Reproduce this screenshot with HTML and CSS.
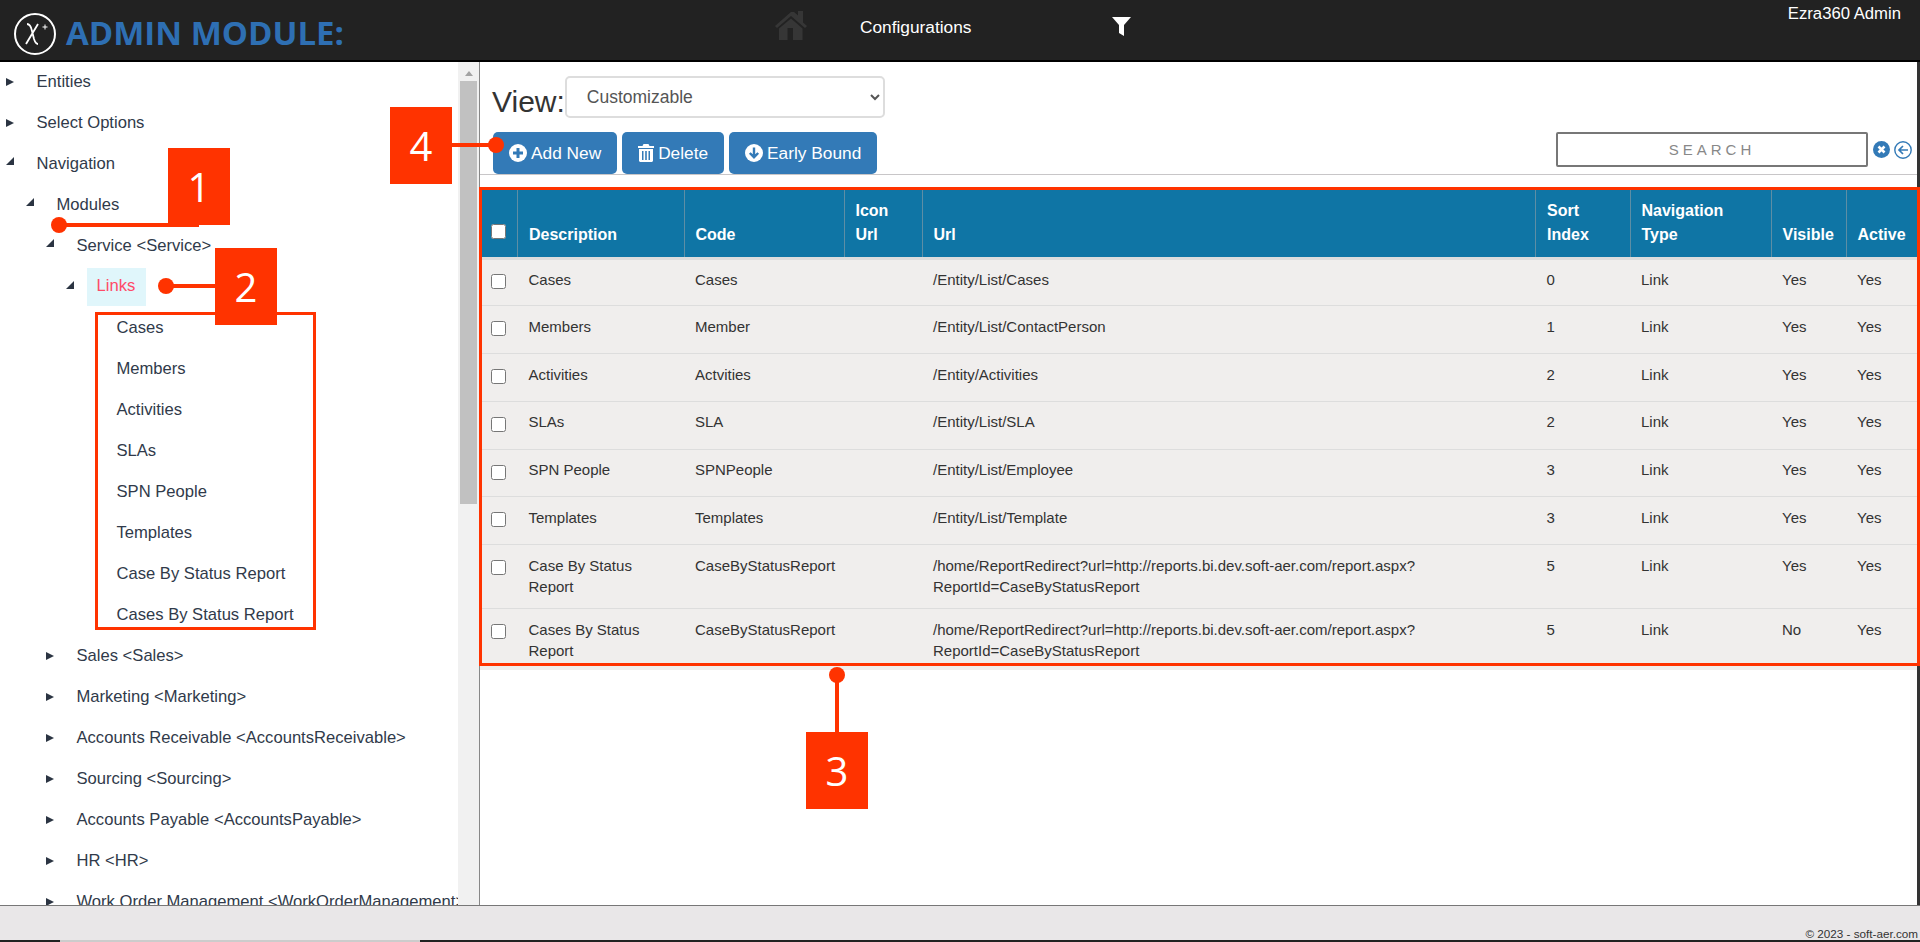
FILE: index.html
```html
<!DOCTYPE html>
<html lang="en">
<head>
  <meta charset="UTF-8">
  <title>Admin Module</title>
  <link rel="stylesheet" href="styles.css">
</head>
<body>

<header class="topbar">
  <div class="brand">
    <svg class="logo" viewBox="0 0 44 44" width="44" height="44">
      <circle cx="22" cy="22" r="20" fill="none" stroke="#fff" stroke-width="2"/>
      <path d="M14 12c3 0 4 2 5 7l2 8c1 3 2 5 4 5M25 12 13 32" fill="none" stroke="#fff" stroke-width="1.800"/>
      <path d="M29.500 15h5M32 12.500v5" stroke="#fff" stroke-width="1"/>
    </svg>
    <span class="brand-title">ADMIN MODULE:</span>
  </div>
  <svg class="home-icon" viewBox="0 0 32 30" width="32" height="30">
    <path d="M16 1 0 15l2 2 14-12 14 12 2-2-4-3.500V0h-5v4.500l-4-3.500z" fill="#363636"/>
    <path d="M4 17.500 16 7.500l11.500 10V29H18V17h-5.500v12H4z" fill="#363636"/>
  </svg>
  <span class="nav-title">Configurations</span>
  <svg class="filter-icon" viewBox="0 0 19 19" width="19" height="19">
    <path d="M0 0h19l-7 8v11l-5-3V8z" fill="#fff"/>
  </svg>
  <span class="user-name">Ezra360 Admin</span>
</header>

<main class="workspace">
  <aside class="sidebar">
    <ul class="tree">
      <li class="closed"><span>Entities</span></li>
      <li class="closed"><span>Select Options</span></li>
      <li class="open"><span>Navigation</span>
        <ul>
          <li class="open"><span>Modules</span>
            <ul>
              <li class="open"><span>Service &lt;Service&gt;</span>
                <ul>
                  <li class="open"><span class="selected">Links</span>
                    <ul>
                      <li><span>Cases</span></li>
                      <li><span>Members</span></li>
                      <li><span>Activities</span></li>
                      <li><span>SLAs</span></li>
                      <li><span>SPN People</span></li>
                      <li><span>Templates</span></li>
                      <li><span>Case By Status Report</span></li>
                      <li><span>Cases By Status Report</span></li>
                    </ul>
                  </li>
                </ul>
              </li>
              <li class="closed"><span>Sales &lt;Sales&gt;</span></li>
              <li class="closed"><span>Marketing &lt;Marketing&gt;</span></li>
              <li class="closed"><span>Accounts Receivable &lt;AccountsReceivable&gt;</span></li>
              <li class="closed"><span>Sourcing &lt;Sourcing&gt;</span></li>
              <li class="closed"><span>Accounts Payable &lt;AccountsPayable&gt;</span></li>
              <li class="closed"><span>HR &lt;HR&gt;</span></li>
              <li class="closed"><span>Work Order Management &lt;WorkOrderManagement&gt;</span></li>
            </ul>
          </li>
        </ul>
      </li>
    </ul>
    <div class="scrollbar">
      <i class="scroll-up"></i>
      <div class="scroll-thumb"></div>
    </div>
  </aside>

  <section class="content">
    <div class="view-row">
      <label class="view-label" for="view">View:</label>
      <select class="view-select" id="view">
        <option>Customizable</option>
      </select>
    </div>

    <div class="toolbar">
      <button class="btn" type="button">
        <svg viewBox="0 0 18 18" width="18" height="18"><circle cx="9" cy="9" r="9" fill="#fff"/><path d="M4 9h10M9 4v10" stroke="#337ab7" stroke-width="3"/></svg>
        Add New
      </button>
      <button class="btn" type="button">
        <svg viewBox="0 0 16 18" width="16" height="18"><path d="M5.500 0h5l1 2H16v2H0V2h4.500zM1 5h14v12l-1 1H2l-1-1zM4 7v9h1.500V7zM7.200 7v9h1.600V7zM10.500 7v9H12V7z" fill="#fff" fill-rule="evenodd"/></svg>
        Delete
      </button>
      <button class="btn" type="button">
        <svg viewBox="0 0 18 18" width="18" height="18"><circle cx="9" cy="9" r="9" fill="#fff"/><path d="M9 3.500V13M4.800 9 9 13.200 13.200 9" fill="none" stroke="#337ab7" stroke-width="2.400"/></svg>
        Early Bound
      </button>
      <div class="search-box">
        <input class="search-input" type="text" placeholder="SEARCH">
        <svg viewBox="0 0 17 17" width="17" height="17"><circle cx="8.500" cy="8.500" r="8.500" fill="#337ab7"/><path d="m5.500 5.500 6 6M11.500 5.500l-6 6" stroke="#fff" stroke-width="2.600"/></svg>
        <svg viewBox="0 0 18 18" width="18" height="18"><circle cx="9" cy="9" r="8.200" fill="none" stroke="#337ab7" stroke-width="1.400"/><path d="M14 9H5M9 5 5 9l4 4" fill="none" stroke="#337ab7" stroke-width="1.700"/></svg>
      </div>
    </div>

    <table class="grid">
      <colgroup>
        <col class="col-check"><col class="col-desc"><col class="col-code"><col class="col-icon"><col class="col-url">
        <col class="col-sort"><col class="col-type"><col class="col-visible"><col class="col-active">
      </colgroup>
      <thead>
        <tr>
          <th><input type="checkbox"></th>
          <th>Description</th>
          <th>Code</th>
          <th>Icon Url</th>
          <th>Url</th>
          <th>Sort Index</th>
          <th>Navigation Type</th>
          <th>Visible</th>
          <th>Active</th>
        </tr>
      </thead>
      <tbody>
        <tr><td><input type="checkbox"></td><td>Cases</td><td>Cases</td><td></td><td>/Entity/List/Cases</td><td>0</td><td>Link</td><td>Yes</td><td>Yes</td></tr>
        <tr><td><input type="checkbox"></td><td>Members</td><td>Member</td><td></td><td>/Entity/List/ContactPerson</td><td>1</td><td>Link</td><td>Yes</td><td>Yes</td></tr>
        <tr><td><input type="checkbox"></td><td>Activities</td><td>Actvities</td><td></td><td>/Entity/Activities</td><td>2</td><td>Link</td><td>Yes</td><td>Yes</td></tr>
        <tr><td><input type="checkbox"></td><td>SLAs</td><td>SLA</td><td></td><td>/Entity/List/SLA</td><td>2</td><td>Link</td><td>Yes</td><td>Yes</td></tr>
        <tr><td><input type="checkbox"></td><td>SPN People</td><td>SPNPeople</td><td></td><td>/Entity/List/Employee</td><td>3</td><td>Link</td><td>Yes</td><td>Yes</td></tr>
        <tr><td><input type="checkbox"></td><td>Templates</td><td>Templates</td><td></td><td>/Entity/List/Template</td><td>3</td><td>Link</td><td>Yes</td><td>Yes</td></tr>
        <tr><td><input type="checkbox"></td><td>Case By Status Report</td><td>CaseByStatusReport</td><td></td><td>/home/ReportRedirect?url=http://reports.bi.dev.soft-aer.com/report.aspx?ReportId=CaseByStatusReport</td><td>5</td><td>Link</td><td>Yes</td><td>Yes</td></tr>
        <tr><td><input type="checkbox"></td><td>Cases By Status Report</td><td>CaseByStatusReport</td><td></td><td>/home/ReportRedirect?url=http://reports.bi.dev.soft-aer.com/report.aspx?ReportId=CaseByStatusReport</td><td>5</td><td>Link</td><td>No</td><td>Yes</td></tr>
      </tbody>
    </table>
  </section>
</main>

<footer class="footer">© 2023 - soft-aer.com</footer>
<div class="taskstrip"><div class="taskstrip-item"></div></div>

<!-- callouts drawn over the screenshot -->
<div class="callout-box box-1">1</div>
<div class="callout-line line-1"></div>
<div class="callout-dot dot-1"></div>

<div class="callout-box box-2">2</div>
<div class="callout-line line-2"></div>
<div class="callout-dot dot-2"></div>
<div class="callout-frame frame-links"></div>

<div class="callout-box box-3">3</div>
<div class="callout-line line-3"></div>
<div class="callout-dot dot-3"></div>
<div class="callout-frame frame-table"></div>

<div class="callout-box box-4">4</div>
<div class="callout-line line-4"></div>
<div class="callout-dot dot-4"></div>

</body>
</html>
```

FILE: styles.css
```css
* {
  box-sizing: border-box;
}

html, body {
  height: 100%;
}

body {
  margin: 0;
  height: 942px;
  overflow: hidden;
  display: flex;
  flex-direction: column;
  position: relative;
  font-family: "Liberation Sans", Arial, sans-serif;
  font-size: 15px;
  color: #333;
  background: #333;
}

/* top bar */
.topbar {
  height: 62px;
  flex: none;
  display: flex;
  background: #222;
  border-bottom: 2px solid #000;
  color: #fff;
}

.brand {
  width: 775px;
  padding: 12px 0 0 13px;
  display: flex;
  align-items: flex-start;
  gap: 9px;
}

.brand-title {
  font-family: "Open Sans", sans-serif;
  font-size: 33px;
  font-weight: 700;
  line-height: 42px;
  color: #2e6fb3;
}

.home-icon {
  margin-top: 11px;
  flex: none;
}

.nav-title {
  margin: 15px 0 0 53px;
  width: 252px;
  font-size: 17.300px;
  line-height: 24px;
}

.filter-icon {
  margin-top: 17px;
  flex: none;
}

.user-name {
  margin-left: auto;
  margin-right: 19px;
  margin-top: 3px;
  font-size: 16.700px;
  line-height: 22px;
}

/* main */
.workspace {
  flex: 1;
  min-height: 0;
  display: flex;
  background: #fff;
  margin-right: 3px;
}

.sidebar {
  width: 480px;
  flex: none;
  display: flex;
  border-right: 1px solid #888;
  overflow: hidden;
}

.tree {
  width: 458px;
  flex: none;
  overflow: hidden;
  font-size: 16.600px;
  color: #303a4a;
}

.tree, .tree ul {
  list-style: none;
  margin: 0;
  padding: 0;
}

.tree {
  padding-left: 36.500px;
}

.tree ul {
  padding-left: 20px;
}

.tree li {
  position: relative;
}

.tree span {
  display: inline-block;
  height: 41px;
  line-height: 39px;
  white-space: nowrap;
}

.tree li.closed::before,
.tree li.open::before {
  content: "";
  position: absolute;
  width: 0;
  height: 0;
  border-style: solid;
}

.tree li.closed::before {
  left: -30.500px;
  top: 16px;
  border-width: 4.500px 0 4.500px 8px;
  border-color: transparent transparent transparent #2b3442;
}

.tree li.open::before {
  left: -30.500px;
  top: 13px;
  border-width: 0 0 8px 8px;
  border-color: transparent transparent #2b3442 transparent;
}

.tree .selected {
  margin: 1px 0 0 -10px;
  height: 38px;
  line-height: 36px;
  padding: 0 11px 0 10px;
  background: #e0f6fb;
  color: #ff4a68;
  display: block;
  width: max-content;
}

.tree .open > .selected {
  margin-bottom: 2px;
}

.scrollbar {
  width: 21px;
  flex: none;
  padding: 0 2px 0 2px;
  background: #f1f1f1;
}

.scroll-up {
  display: block;
  width: 0;
  height: 0;
  margin: 9px auto 5px;
  border-style: solid;
  border-width: 0 4.500px 5px 4.500px;
  border-color: transparent transparent #a3a3a3 transparent;
}

.scroll-thumb {
  height: 423px;
  background: #c1c1c1;
}

.content {
  flex: 1;
  min-width: 0;
}

.view-row {
  height: 70px;
  padding: 14px 0 0 12px;
  display: flex;
  align-items: flex-start;
}

.view-label {
  font-size: 30px;
  line-height: 50px;
  margin-top: 1px;
}

.view-select {
  width: 320px;
  height: 42px;
  padding: 0 16px;
  font-family: inherit;
  font-size: 17.500px;
  color: #555;
  background: #fff;
  border: 2px solid #ddd;
  border-radius: 5px;
}

.toolbar {
  height: 43px;
  display: flex;
  gap: 5px;
  padding-left: 13px;
  border-bottom: 1px solid #c8c6c8;
}

.btn {
  height: 42px;
  padding: 0 16px;
  display: flex;
  align-items: center;
  gap: 4px;
  font-family: inherit;
  font-size: 17.300px;
  color: #fff;
  background: #337ab7;
  border: 0;
  border-radius: 5px;
}

.search-box {
  margin-left: auto;
  height: 35px;
  display: flex;
  align-items: center;
  gap: 4px;
  padding-right: 5px;
}

.search-input {
  width: 312px;
  height: 35px;
  margin-right: 1px;
  font-family: inherit;
  font-size: 15px;
  letter-spacing: 4px;
  text-align: center;
  border: 2px solid #777;
  border-radius: 2px;
}

.search-input::placeholder {
  color: #888;
  opacity: 1;
}

.grid {
  width: 1437px;
  margin: 14px 0 0 0;
  table-layout: fixed;
  border-collapse: collapse;
}

.col-check { width: 37.5px; }
.col-desc { width: 166.5px; }
.col-code { width: 160px; }
.col-icon { width: 78px; }
.col-url { width: 613.5px; }
.col-sort { width: 94.5px; }
.col-type { width: 141px; }
.col-visible { width: 75px; }
.col-active { width: 71px; }

.grid th {
  height: 69px;
  padding: 0 10px 10px 11px;
  text-align: left;
  vertical-align: bottom;
  font-size: 16px;
  line-height: 24px;
  color: #fff;
  background: #0f75a5;
  border-left: 1px solid #5d8ea5;
  border-bottom: 3px solid #ddd;
}

.grid th:first-child {
  border-left: 0;
}

.grid td {
  padding: 9.600px 10px 11.400px 11px;
  vertical-align: top;
  font-size: 15px;
  line-height: 21px;
  background: #f0eeed;
  border-bottom: 1px solid #ddd;
}

.grid tbody tr {
  height: 47.800px;
}

.grid tbody tr:last-child td {
  padding-bottom: 9px;
  border-bottom: 0;
}

.grid input[type="checkbox"] {
  width: 15px;
  height: 15px;
  margin: 5.400px 0 0 0;
  display: block;
}

.grid th input[type="checkbox"] {
  margin: 0 0 8px 0;
}

/* footer */
.footer {
  height: 35px;
  flex: none;
  padding: 21px 2px 0 0;
  text-align: right;
  font-size: 11.700px;
  line-height: 13px;
  background: #e9e7e8;
  border-top: 1px solid #777;
}

.taskstrip {
  height: 2px;
  flex: none;
  padding-left: 60px;
  background: #222;
}

.taskstrip-item {
  width: 360px;
  height: 2px;
  background: #ccc;
}

/* callouts */
.callout-box {
  position: absolute;
  width: 62px;
  height: 77px;
  font-family: "Open Sans", sans-serif;
  font-size: 40px;
  line-height: 77px;
  text-align: center;
  color: #fff;
  background: #ff3300;
}

.callout-line {
  position: absolute;
  background: #ff3300;
}

.callout-dot {
  position: absolute;
  width: 16px;
  height: 16px;
  border-radius: 50%;
  background: #ff3300;
}

.callout-frame {
  position: absolute;
  border: 3px solid #ff3300;
}

.box-1 { left: 168px; top: 148px; }
.line-1 { left: 59px; top: 223px; width: 140px; height: 4px; }
.dot-1 { left: 51px; top: 217px; }

.box-2 { left: 215px; top: 248px; }
.line-2 { left: 166px; top: 284px; width: 50px; height: 4px; }
.dot-2 { left: 158px; top: 278px; }
.frame-links { left: 95px; top: 312px; width: 221px; height: 318px; }

.box-3 { left: 806px; top: 732px; }
.line-3 { left: 835px; top: 675px; width: 4px; height: 58px; }
.dot-3 { left: 829px; top: 667px; }
.frame-table { left: 479px; top: 187px; width: 1441px; height: 479px; }

.box-4 { left: 390px; top: 107px; }
.line-4 { left: 452px; top: 143px; width: 44px; height: 4px; }
.dot-4 { left: 488px; top: 137px; }
```
